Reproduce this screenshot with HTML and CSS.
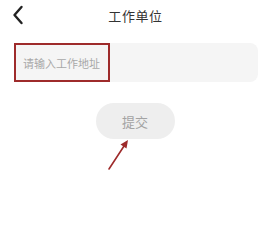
FILE: index.html
```html
<!DOCTYPE html>
<html lang="zh-CN">

<head>
    <meta charset="UTF-8">
    <meta name="viewport" content="width=device-width, initial-scale=1.0">
    <title>工作单位</title>
    <link rel="stylesheet" href="styles.css">
</head>

<body>
    <div class="header">
        <div class="back">
            <svg width="12" height="20" viewBox="0 0 12 20">
                <path d="M9.5 2 L2.5 10 L9.5 18" fill="none" stroke="#222" stroke-width="2.4" stroke-linecap="round" stroke-linejoin="round" />
            </svg>
        </div>
        <h1>工作单位</h1>
    </div>

    <div class="form">
        <div class="field">
            <input type="text" placeholder="请输入工作地址">
            <div class="mark-box"></div>
        </div>
        <div class="btn-row">
            <button class="submit">提交</button>
        </div>
    </div>

    <svg class="mark-arrow" width="30" height="34" viewBox="0 0 30 34">
        <path d="M4 31 L21 5" stroke="#9e2b2b" stroke-width="1.6" stroke-linecap="round" />
        <path d="M23 2 L15.5 6.5 L21.5 10.5 Z" fill="#9e2b2b" />
    </svg>
</body>

</html>
```

FILE: styles.css
```css
* {
    margin: 0px;
    padding: 0px;
    box-sizing: border-box;
}

body {
    position: relative;
    min-height: 238px;
    background-color: #fff;
    font-family: "Noto Sans CJK SC", "Noto Sans", sans-serif;
}

.header {
    position: relative;
    height: 30px;
    display: flex;
    align-items: center;
    justify-content: center;
}

.back {
    position: absolute;
    left: 12px;
    top: 5px;
}

h1 {
    font-size: 13px;
    font-weight: 400;
    color: #333;
    letter-spacing: 0.6px;
    margin-left: 1px;
}

.form {
    padding: 13px 12px 0 14px;
}

.field {
    position: relative;
}

.field input {
    width: 100%;
    height: 39px;
    border: none;
    outline: none;
    border-radius: 8px;
    background-color: #f5f5f5;
    padding-left: 9px;
    font-family: inherit;
    font-size: 11px;
    color: #333;
}

.field input::placeholder {
    color: #a8a8a8;
}

.mark-box {
    position: absolute;
    left: 0;
    top: 0;
    width: 96px;
    height: 39px;
    border: 2px solid #9e2b2b;
}

.btn-row {
    display: flex;
    justify-content: center;
    margin-top: 21px;
    margin-left: -2px;
}

.submit {
    width: 79px;
    height: 36px;
    border: none;
    border-radius: 18px;
    background-color: #eeeeee;
    color: #a3a3a3;
    font-family: inherit;
    font-size: 13px;
}

.mark-arrow {
    position: absolute;
    left: 105px;
    top: 138px;
}
```
